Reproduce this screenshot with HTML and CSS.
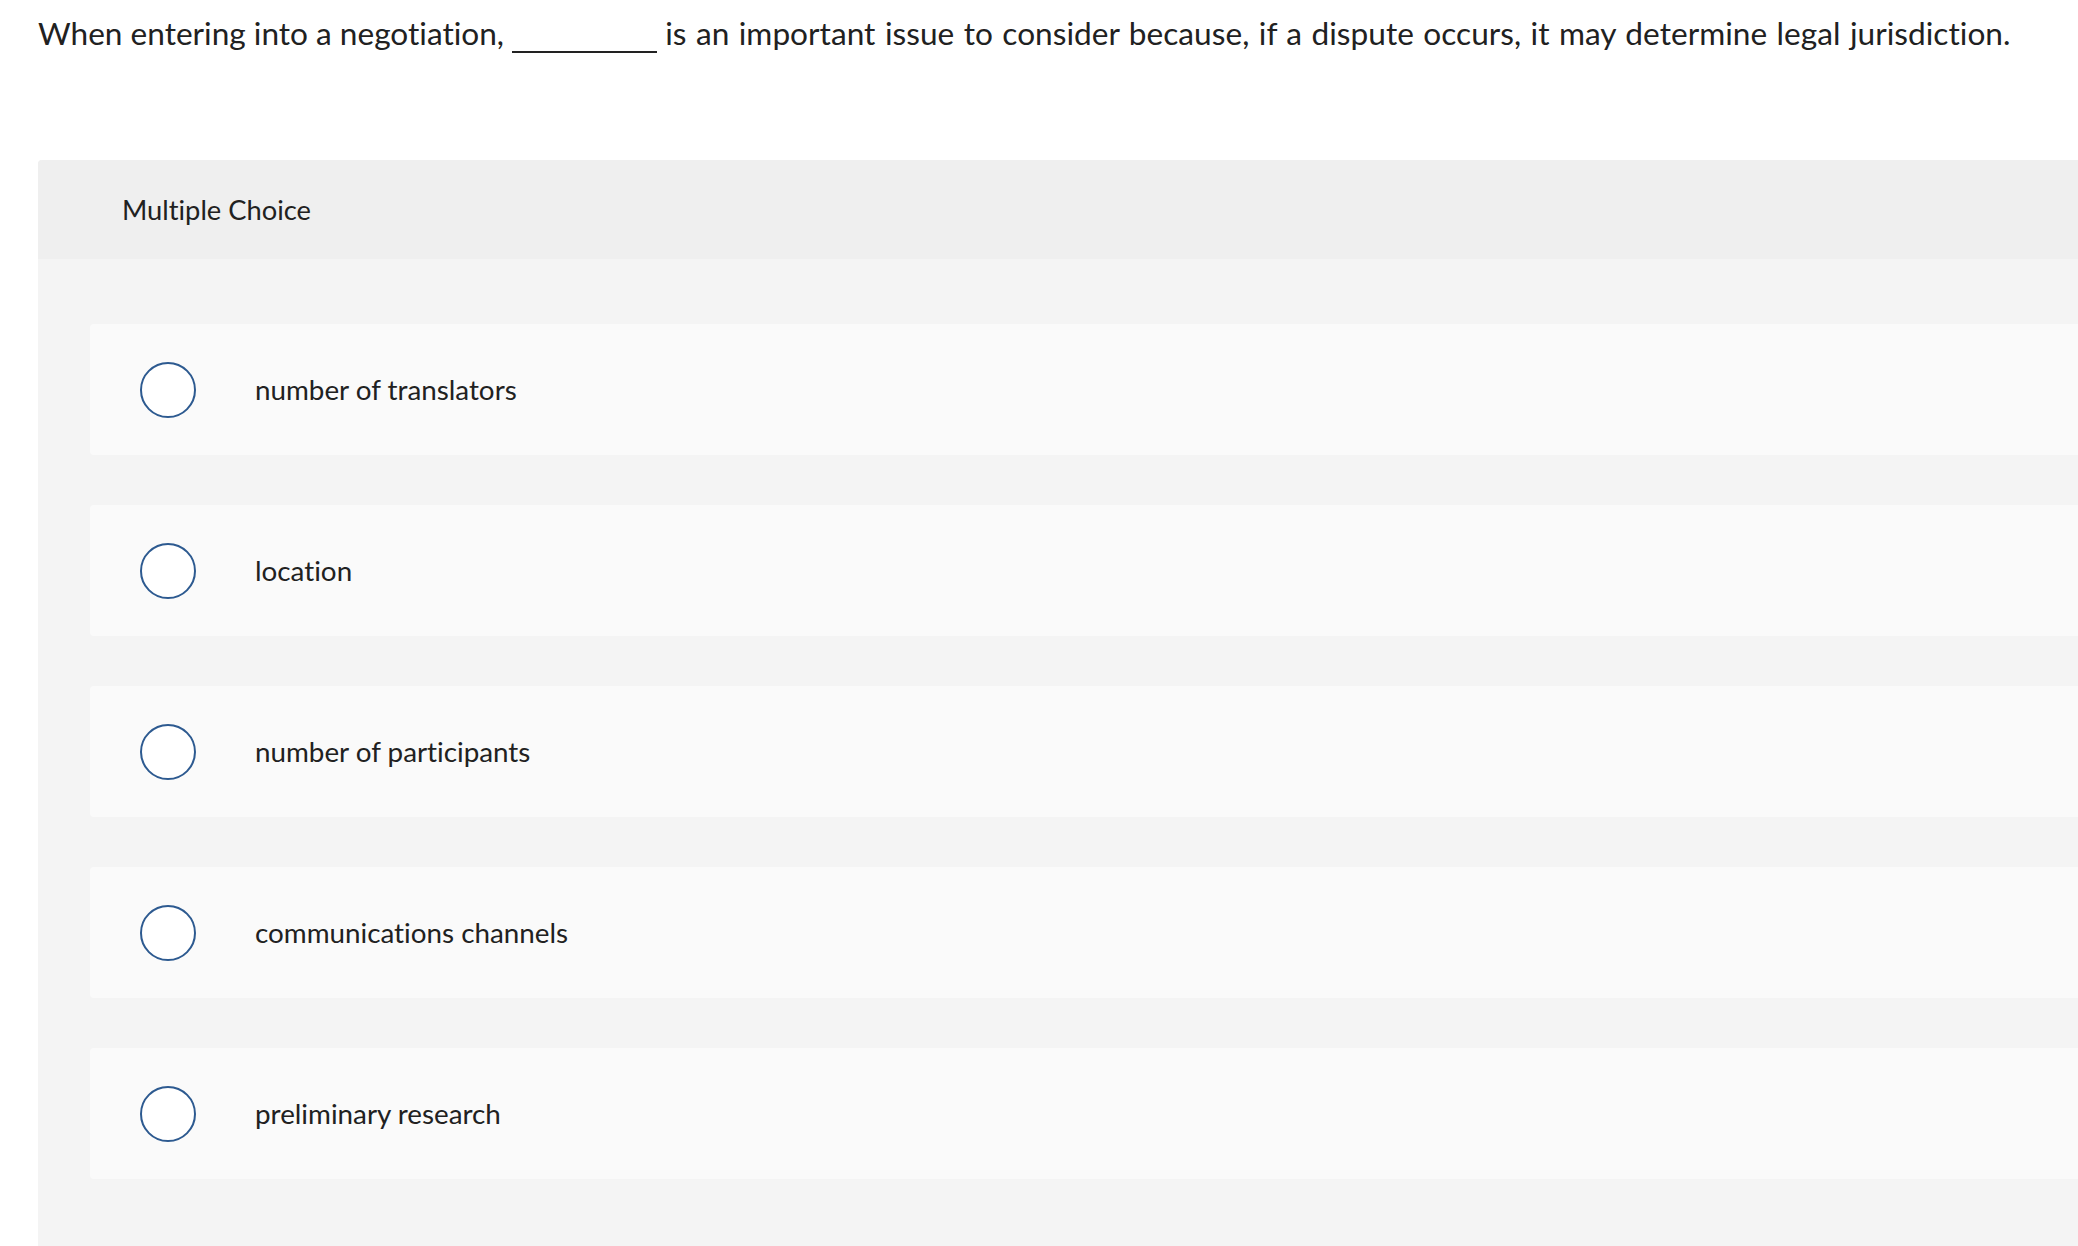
FILE: index.html
```html
<!DOCTYPE html>
<html lang="en">
<head>
<meta charset="utf-8">
<title>Multiple Choice</title>
<link rel="stylesheet" href="styles.css">
</head>
<body>
<div class="page">
  <p class="question">When entering into a negotiation, <span class="blank"></span> <span class="tail">is an important issue to consider because, if a dispute occurs, it may determine legal jurisdiction.</span></p>
  <section class="card">
    <header class="card-header">Multiple Choice</header>
    <div class="card-body">
      <label class="option"><span class="radio"></span><span class="option-text">number of translators</span></label>
      <label class="option"><span class="radio"></span><span class="option-text">location</span></label>
      <label class="option"><span class="radio"></span><span class="option-text">number of participants</span></label>
      <label class="option"><span class="radio"></span><span class="option-text">communications channels</span></label>
      <label class="option"><span class="radio"></span><span class="option-text">preliminary research</span></label>
    </div>
  </section>
</div>
</body>
</html>
```
FILE: styles.css
```css
html, body {
  margin: 0;
  padding: 0;
  background: #ffffff;
  overflow: hidden;
}

body {
  font-family: "Lato", "Liberation Sans", sans-serif;
  font-variant-ligatures: none;
  color: #212121;
}

.page {
  padding: 14px 0 0 38px;
}

.question {
  margin: 0;
  font-size: 31.6px;
  line-height: 38px;
  white-space: nowrap;
}

.tail {
  word-spacing: 1.3px;
  letter-spacing: 0.03px;
}

.blank {
  display: inline-block;
  width: 145px;
  height: 0;
  border-bottom: 2px solid #222222;
  vertical-align: -8px;
}

.card {
  margin-top: 107px;
  background: #f4f4f4;
  border-top-left-radius: 4px;
  overflow: hidden;
}

.card-header {
  display: flex;
  align-items: center;
  height: 99px;
  padding-left: 84px;
  background: #efefef;
  font-size: 27.3px;
}

.card-body {
  display: flex;
  flex-direction: column;
  gap: 50px;
  padding: 65px 0 120px 52px;
}

.option {
  display: flex;
  align-items: center;
  height: 131px;
  padding-left: 50px;
  background: #fafafa;
  border-radius: 4px 0 0 4px;
}

.radio {
  flex: none;
  box-sizing: border-box;
  width: 56px;
  height: 56px;
  border: 2px solid #2d5a90;
  border-radius: 50%;
  background: #ffffff;
}

.option-text {
  margin-left: 59px;
  font-size: 27.8px;
}
```
